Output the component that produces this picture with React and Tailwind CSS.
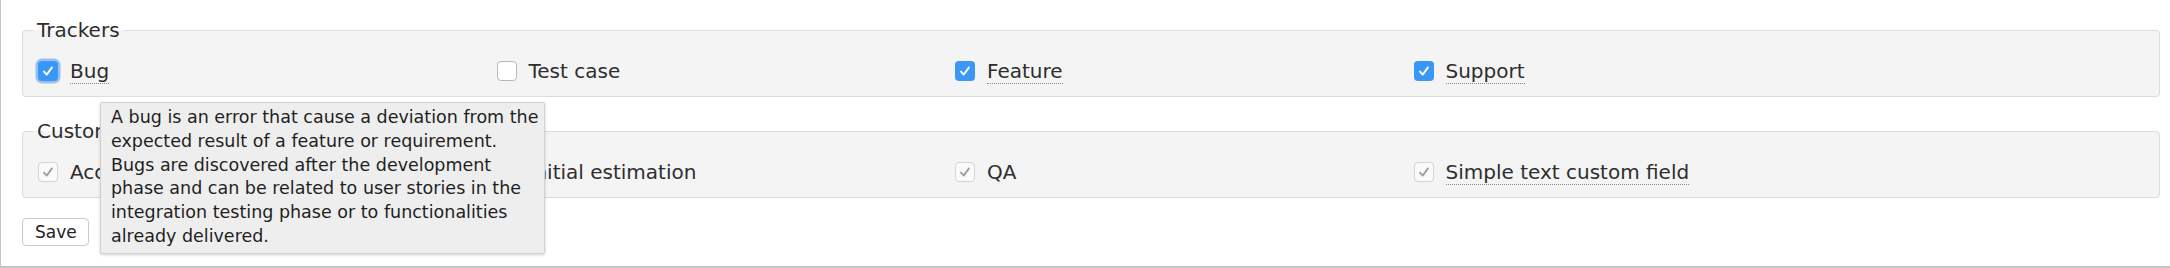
import React from "react"

const trackers = [
  { name: "Bug", checked: true, hint: true, focus: true },
  { name: "Test case", checked: false },
  { name: "Feature", checked: true, hint: true },
  { name: "Support", checked: true, hint: true },
]

const customFields = [
  { name: "Acceptance criteria", checked: true, disabled: true },
  { name: "Initial estimation", checked: true, disabled: true },
  { name: "QA", checked: true, disabled: true },
  { name: "Simple text custom field", checked: true, disabled: true, hint: true },
]

const bugHint = [
  "A bug is an error that cause a deviation from the",
  "expected result of a feature or requirement.",
  "Bugs are discovered after the development",
  "phase and can be related to user stories in the",
  "integration testing phase or to functionalities",
  "already delivered.",
]

function Tick({ color }) {
  return (
    <svg width="14" height="14" viewBox="0 0 14 14" fill="none">
      <path d="M3 7.6 L5.7 10.6 L11 3.4" stroke={color} strokeWidth="1.9" strokeLinecap="round" strokeLinejoin="round" />
    </svg>
  )
}

function Box({ checked, disabled, focus }) {
  if (disabled) {
    return (
      <span className="flex h-[20px] w-[20px] shrink-0 items-center justify-center rounded-[4px] border border-[#d4d4d4] bg-[#fafafa]">
        <Tick color="#a0a0a0" />
      </span>
    )
  }
  if (checked) {
    return (
      <span
        className={`flex h-[20px] w-[20px] shrink-0 items-center justify-center rounded-[4px] bg-[#3b97f6] ${
          focus ? "shadow-[0_0_0_2.5px_rgba(80,150,235,0.55)]" : ""
        }`}
      >
        <Tick color="#ffffff" />
      </span>
    )
  }
  return <span className="h-[20px] w-[20px] shrink-0 rounded-[4px] border border-[#b9b9b9] bg-white" />
}

function Item({ item }) {
  return (
    <label className="flex h-[28px] w-[458.5px] shrink-0 items-center gap-[12px]">
      <Box checked={item.checked} disabled={item.disabled} focus={item.focus} />
      <span
        className={`leading-[24px] ${item.hint ? "border-b border-dotted border-[#8c8c8c]" : ""}`}
      >
        {item.name}
      </span>
    </label>
  )
}

function Group({ title, items }) {
  return (
    <fieldset className="rounded-[4px] border border-[#dcdcdc] bg-[#f4f4f4] pl-[10px] pt-[15px] pb-[11px]">
      <legend className="px-[4px] leading-[24px]">{title}</legend>
      <div className="flex pl-[5px]">
        {items.map((it) => (
          <Item key={it.name} item={it} />
        ))}
      </div>
    </fieldset>
  )
}

export default function App() {
  return (
    <div className="relative h-[268px] w-[2170px] overflow-hidden border-b-2 border-l border-[#c4c4c4] bg-white pt-[18px] pl-[21px] pr-[10px] font-['DejaVu_Sans',Verdana,sans-serif] text-[20px] text-[#2e2e2e]">
      <Group title="Trackers" items={trackers} />
      <div className="mt-[22px]">
        <Group title="Custom fields" items={customFields} />
      </div>
      <button className="mt-[20px] h-[28px] rounded-[4px] border border-[#c9c9c9] bg-white pl-[12px] pr-[11px] text-[17px] leading-[20px] text-[#222]">
        Save
      </button>

      {/* tooltip over the Bug label */}
      <div className="absolute left-[99px] top-[102px] w-[445px] rounded-[2px] border border-[#d2d2d2] bg-[#eeeeee] pt-[3px] pb-[4px] pl-[10px] pr-[6px] text-[17.5px] leading-[23.75px] text-[#1f1f1f] shadow-[0_1px_3px_rgba(0,0,0,0.18)]">
        {bugHint.map((line) => (
          <div key={line} className="whitespace-nowrap">
            {line}
          </div>
        ))}
      </div>
    </div>
  )
}
